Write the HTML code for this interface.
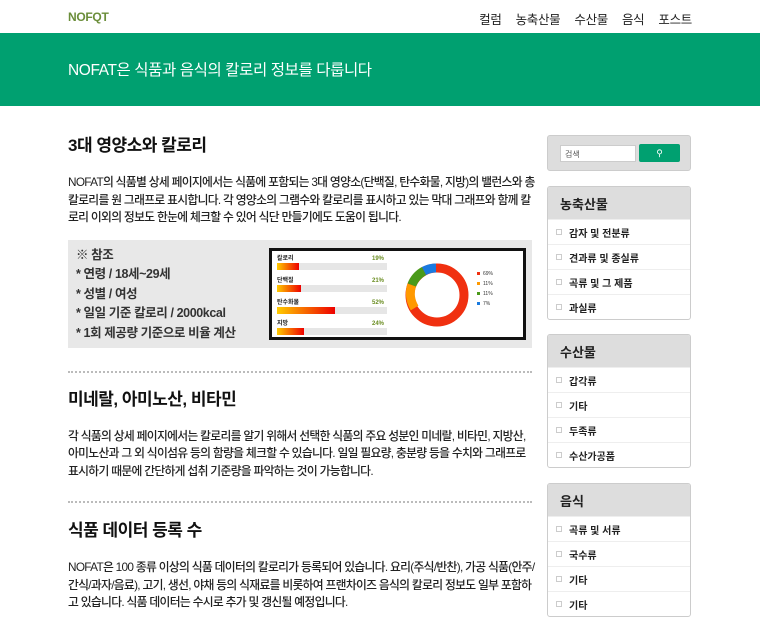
<!DOCTYPE html>
<html><head><meta charset="utf-8"><style>
*{margin:0;padding:0;box-sizing:border-box}
body{width:760px;height:600px;overflow:hidden;background:#fff;font-family:"Liberation Sans","Noto Sans CJK KR",sans-serif;color:#222}
.top{height:33px;position:relative}
.logo{position:absolute;left:68px;top:10px;font-weight:900;font-size:12px;color:#6b8e3a;letter-spacing:-0.3px}
.nav{position:absolute;right:68px;top:9px;font-size:12.5px;color:#222;letter-spacing:-0.3px}
.nav span{margin-left:14px}
.band{background:#00a070;height:73px;color:#fff;font-size:15.5px;padding:25px 0 0 68px;letter-spacing:-0.4px}
.main{position:absolute;left:68px;top:106px;width:468px}
h2{font-size:17px;font-weight:700;color:#111;letter-spacing:-0.5px;line-height:22px}
p{font-size:11.8px;line-height:17.5px;margin-top:17px;color:#222;letter-spacing:-0.7px;font-weight:500}
.box{margin-top:13px;height:108px;background:#e8e8e8;position:relative;width:464px}
.ref{position:absolute;left:8px;top:6px;font-size:12.5px;line-height:19.5px;font-weight:700;color:#333;letter-spacing:-0.4px}
.chart{position:absolute;left:201px;top:8px;width:257px;height:92px;border:3px solid #111;background:#fff}
.hr{border-top:2px dotted #bbb;margin-top:23px;width:464px}
.side{position:absolute;left:547px;width:144px}
.search{top:135px;height:36px;background:#ddd;border:1px solid #ccc;border-radius:3px}
.search .in{position:absolute;left:12px;top:9px;width:76px;height:17px;background:#fff;border:1px solid #ccc;font-size:8px;padding:3px 4px;color:#555}
.search .bt{position:absolute;left:91px;top:8px;width:41px;height:18px;background:#00a070;border-radius:2px;color:#fff;font-size:9px;text-align:center;line-height:18px}
.card{border:1px solid #ccc;border-radius:3px;overflow:hidden;background:#fff}
.card .h{background:#ddd;height:32px;font-weight:700;font-size:13px;padding:7px 0 0 12px;color:#222}
.card .i{height:25px;border-top:1px solid #eee;font-size:10px;font-weight:700;padding:5px 0 0 21px;position:relative;color:#222}
.card .i:before{content:"";position:absolute;left:8px;top:9px;width:4px;height:4px;border:1px solid #ccc}
</style></head><body>
<div class="top"><div class="logo">NOFQT</div><div class="nav"><span>컬럼</span><span>농축산물</span><span>수산물</span><span>음식</span><span>포스트</span></div></div>
<div class="band">NOFAT은 식품과 음식의 칼로리 정보를 다룹니다</div>
<div class="main">
<h2 style="margin-top:29px">3대 영양소와 칼로리</h2>
<p>NOFAT의 식품별 상세 페이지에서는 식품에 포함되는 3대 영양소(단백질, 탄수화물, 지방)의 밸런스와 총 칼로리를 원 그래프로 표시합니다. 각 영양소의 그램수와 칼로리를 표시하고 있는 막대 그래프와 함께 칼로리 이외의 정보도 한눈에 체크할 수 있어 식단 만들기에도 도움이 됩니다.</p>
<div class="box"><div class="ref">※ 참조<br>* 연령 / 18세~29세<br>* 성별 / 여성<br>* 일일 기준 칼로리 / 2000kcal<br>* 1회 제공량 기준으로 비율 계산</div>
<div class="chart"><svg width="251" height="86" viewBox="0 0 251 86">
<g font-size="6" font-weight="700" fill="#222">
<text x="5" y="9">칼로리</text><text x="5" y="31">단백질</text><text x="5" y="53">탄수화물</text><text x="5" y="74">지방</text>
<text x="100" y="9" fill="#6b8e23">19%</text><text x="100" y="31" fill="#6b8e23">21%</text><text x="100" y="53" fill="#6b8e23">52%</text><text x="100" y="74" fill="#6b8e23">24%</text></g>
<defs><linearGradient id="g"><stop offset="0" stop-color="#fc0"/><stop offset="1" stop-color="#e00"/></linearGradient></defs>
<rect x="5" y="12" width="110" height="7" fill="#e6e6e6"/><rect x="5" y="12" width="22" height="7" fill="url(#g)"/>
<rect x="5" y="34" width="110" height="7" fill="#e6e6e6"/><rect x="5" y="34" width="24" height="7" fill="url(#g)"/>
<rect x="5" y="56" width="110" height="7" fill="#e6e6e6"/><rect x="5" y="56" width="58" height="7" fill="url(#g)"/>
<rect x="5" y="77" width="110" height="7" fill="#e6e6e6"/><rect x="5" y="77" width="27" height="7" fill="url(#g)"/>
<circle cx="165" cy="44" r="27" fill="none" stroke="#f03010" stroke-width="9"/>
<path d="M142.6 57 A27 27 0 0 1 139.8 34" fill="none" stroke="#f90" stroke-width="9"/>
<path d="M139.8 34 A27 27 0 0 1 152 20" fill="none" stroke="#4a9a1a" stroke-width="9"/>
<path d="M152 20 A27 27 0 0 1 164 17" fill="none" stroke="#1a7ae0" stroke-width="9"/>
<g font-size="5" fill="#333"><rect x="205" y="21" width="3" height="3" fill="#f03010"/><text x="211" y="24">69%</text>
<rect x="205" y="31" width="3" height="3" fill="#f90"/><text x="211" y="34">11%</text>
<rect x="205" y="41" width="3" height="3" fill="#4a9a1a"/><text x="211" y="44">11%</text>
<rect x="205" y="51" width="3" height="3" fill="#1a7ae0"/><text x="211" y="54">7%</text></g>
</svg></div></div>
<div class="hr"></div>
<h2 style="margin-top:16px">미네랄, 아미노산, 비타민</h2>
<p>각 식품의 상세 페이지에서는 칼로리를 알기 위해서 선택한 식품의 주요 성분인 미네랄, 비타민, 지방산, 아미노산과 그 외 식이섬유 등의 함량을 체크할 수 있습니다. 일일 필요량, 충분량 등을 수치와 그래프로 표시하기 때문에 간단하게 섭취 기준량을 파악하는 것이 가능합니다.</p>
<div class="hr" style="margin-top:21px"></div>
<h2 style="margin-top:17px">식품 데이터 등록 수</h2>
<p>NOFAT은 100 종류 이상의 식품 데이터의 칼로리가 등록되어 있습니다. 요리(주식/반찬), 가공 식품(안주/간식/과자/음료), 고기, 생선, 야채 등의 식재료를 비롯하여 프랜차이즈 음식의 칼로리 정보도 일부 포함하고 있습니다. 식품 데이터는 수시로 추가 및 갱신될 예정입니다.</p>
</div>
<div class="side search"><div class="in">검색</div><div class="bt">⚲</div></div>
<div class="side card" style="top:186px"><div class="h">농축산물</div><div class="i">감자 및 전분류</div><div class="i">견과류 및 종실류</div><div class="i">곡류 및 그 제품</div><div class="i">과실류</div></div>
<div class="side card" style="top:334px"><div class="h">수산물</div><div class="i">갑각류</div><div class="i">기타</div><div class="i">두족류</div><div class="i">수산가공품</div></div>
<div class="side card" style="top:483px"><div class="h">음식</div><div class="i">곡류 및 서류</div><div class="i">국수류</div><div class="i">기타</div><div class="i">기타</div></div>
</body></html>
